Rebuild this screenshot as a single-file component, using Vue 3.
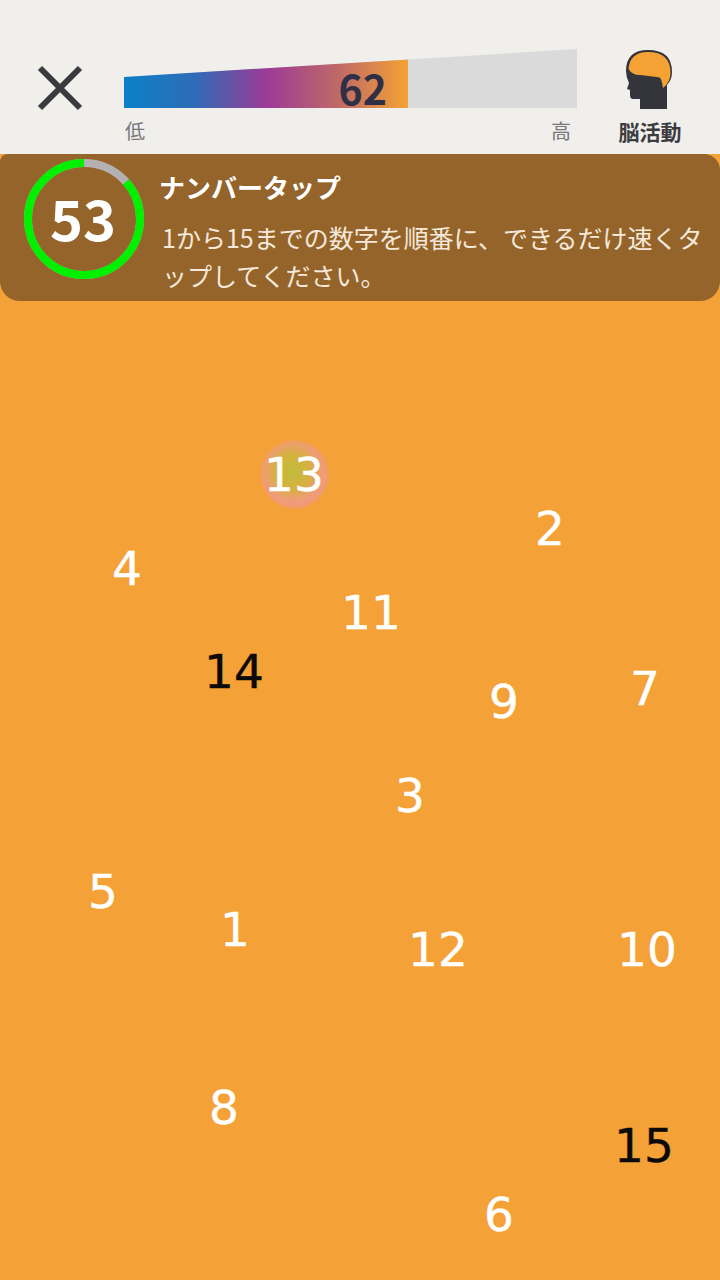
<script setup>
const numbers = [
  { n: 13, x: 294, y: 474, hit: true },
  { n: 2, x: 550, y: 528 },
  { n: 4, x: 127, y: 568 },
  { n: 11, x: 371, y: 612 },
  { n: 14, x: 234, y: 671, dark: true },
  { n: 9, x: 504, y: 701 },
  { n: 7, x: 645, y: 688 },
  { n: 3, x: 410, y: 795 },
  { n: 5, x: 103, y: 891 },
  { n: 1, x: 235, y: 929 },
  { n: 12, x: 438, y: 949 },
  { n: 10, x: 647, y: 949 },
  { n: 8, x: 224, y: 1107 },
  { n: 15, x: 644, y: 1145, dark: true },
  { n: 6, x: 499, y: 1214 }
]
const place = (item) => ({ left: item.x + 'px', top: item.y + 'px' })
</script>

<template>
  <div class="screen">
    <header class="top">
      <svg class="close" width="46" height="46" viewBox="0 0 46 46">
        <path d="M3 3 L43 43 M43 3 L3 43" stroke="#3a3a3f" stroke-width="6" fill="none" />
      </svg>
      <div class="meter">
        <div class="track">
          <div class="fill"><span class="score">62</span></div>
        </div>
        <div class="ends"><span>低</span><span>高</span></div>
      </div>
      <div class="brain">
        <svg width="50" height="60" viewBox="0 0 50 60">
          <path d="M15 60 V50 H8 Q5 50 5 46 V41 L2 40 L4 34 Q1 28 1 22 Q1 1 23 1 Q47 1 47 23 Q47 31 42 36 V60 Z" fill="#34343c" />
          <path d="M3.500 20 Q5 3 23 3 Q45.500 3 45.500 24 Q45.500 33 38 39 Q37 33 36 30 Q35 28 32 28 L15 26 Q7 26 3.500 20 Z" fill="#f4a233" />
        </svg>
        <span class="brain-label">脳活動</span>
      </div>
    </header>

    <main class="field">
      <section class="panel">
        <div class="timer">
          <svg width="120" height="120" viewBox="0 0 120 120">
            <circle cx="60" cy="60" r="56" fill="none" stroke="#b5b1b2" stroke-width="8" />
            <circle cx="60" cy="60" r="56" fill="none" stroke="#00f000" stroke-width="8"
              stroke-dasharray="304 352" transform="rotate(-90 60 60) scale(1 -1) translate(0 -120)" />
          </svg>
          <span class="timer-value">53</span>
        </div>
        <div class="copy">
          <h1>ナンバータップ</h1>
          <p>1から15までの数字を順番に、できるだけ速くタップしてください。</p>
        </div>
      </section>

      <div class="canvas">
        <div class="halo"></div>
        <span v-for="item in numbers" :key="item.n" class="num" :class="{ dark: item.dark }" :style="place(item)">{{ item.n }}</span>
      </div>
    </main>
  </div>
</template>

<style>
html, body { margin: 0; background: #f0efec; }
</style>

<style scoped>
.screen {
  width: 720px;
  height: 1280px;
  display: flex;
  flex-direction: column;
  overflow: hidden;
  font-family: "Noto Sans CJK JP", "Noto Sans", sans-serif;
}
.top {
  height: 154px;
  box-sizing: border-box;
  background: #f0efec;
  display: flex;
  align-items: flex-start;
  padding: 49px 0 0 37px;
}
.close { margin-top: 16px; margin-right: 41px; flex: none; }
.meter { width: 453px; flex: none; }
.track {
  height: 59px;
  background: #dbdadb;
  clip-path: polygon(0 28px, 100% 0, 100% 100%, 0 100%);
}
.fill {
  width: 284px;
  height: 100%;
  background: linear-gradient(90deg, #0b80c8 0%, #2e6cb6 25%, #9c3a96 50%, #c06a66 76%, #f4a233 100%);
  position: relative;
}
.score {
  position: absolute;
  right: 21px;
  bottom: -3px;
  font-size: 41px;
  line-height: 48px;
  font-weight: 700;
  color: #2f3045;
}
.ends {
  display: flex;
  justify-content: space-between;
  padding: 9px 6px 0 1px;
  font-size: 20px;
  line-height: 28px;
  color: #77777a;
}
.brain {
  width: 146px;
  flex: none;
  display: flex;
  flex-direction: column;
  align-items: center;
  gap: 9px;
}
.brain-label {
  font-size: 21px;
  line-height: 26px;
  font-weight: 700;
  color: #3c3c40;
}
.field {
  position: relative;
  flex: 1;
  background: #f4a137;
}
.panel {
  height: 147px;
  box-sizing: border-box;
  background: #94642a;
  border-radius: 8px 16px 20px 20px;
  display: flex;
  padding: 5px 0 0 24px;
}
.timer {
  width: 120px;
  height: 120px;
  flex: none;
  position: relative;
  display: flex;
  align-items: center;
  justify-content: center;
}
.timer svg { position: absolute; inset: 0; }
.timer-value {
  position: relative;
  top: -2px;
  left: -1px;
  font-size: 56px;
  line-height: 1;
  font-weight: 700;
  color: #fff;
}
.copy {
  margin-left: 16px;
  padding-top: 10px;
  width: 548px;
  color: #fff;
}
h1 {
  margin: 0 0 0 -1px;
  font-size: 26px;
  line-height: 36px;
  font-weight: 700;
}
p {
  margin: 13px 0 0 2px;
  font-size: 25px;
  line-height: 38px;
  letter-spacing: 0;
  color: #f6e9dc;
}
.canvas {
  position: absolute;
  inset: -154px 0 0;
  pointer-events: none;
}
.halo {
  position: absolute;
  left: 261px;
  top: 441px;
  width: 67px;
  height: 67px;
  border-radius: 50%;
  filter: blur(1.5px);
  background: radial-gradient(circle at 47% 45%, #bfbe3e 0%, #d6b03e 34%, #f09c78 58%, #ef9484 88%, #f09a70 100%);
}
.num {
  position: absolute;
  transform: translate(-50%, -50%);
  font-family: "DejaVu Sans", sans-serif;
  font-size: 47px;
  line-height: 1;
  color: #fff;
  -webkit-text-stroke: 0.4px currentColor;
}
.num.dark { color: #0c0a08; }
</style>
